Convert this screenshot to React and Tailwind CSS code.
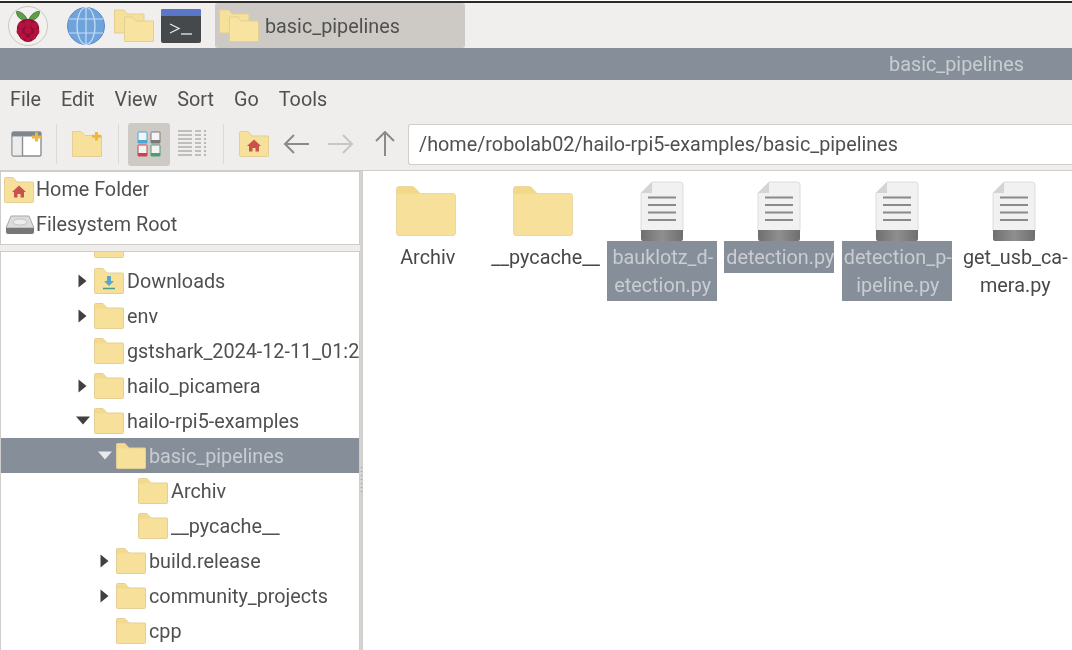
import React from 'react';

const Folder = ({ w = 30, h = 26, className = '' }) => (
  <svg width={w} height={h} viewBox="0 0 30 26" className={`shrink-0 ${className}`}>
    <path d="M0.5 1.5 Q0.5 0.5 1.5 0.5 H9 L13 5 H29 Q29.5 5 29.5 6 V24.5 Q29.5 25.5 28.5 25.5 H1.5 Q0.5 25.5 0.5 24.5 Z" fill="#f6e09a" stroke="#e3cf95" />
    <path d="M1 1.5 H9 L12.5 5.5 H1 Z" fill="#f3d98c" />
  </svg>
);

const HomeMark = ({ x = 15, y = 15, s = 1 }) => (
  <path
    transform={`translate(${x} ${y}) scale(${s})`}
    d="M0 -6.5 L7 0 H5 V5.5 H1.5 V2 H-1.5 V5.5 H-5 V0 H-7 Z"
    fill="#c9524c"
  />
);

const HomeFolder = ({ className = '' }) => (
  <svg width="30" height="26" viewBox="0 0 30 26" className={`shrink-0 ${className}`}>
    <path d="M0.5 1.5 Q0.5 0.5 1.5 0.5 H9 L13 5 H29 Q29.5 5 29.5 6 V24.5 Q29.5 25.5 28.5 25.5 H1.5 Q0.5 25.5 0.5 24.5 Z" fill="#f6e09a" stroke="#e3cf95" />
    <HomeMark x={15} y={15} />
  </svg>
);

const DownloadFolder = () => (
  <svg width="30" height="26" viewBox="0 0 30 26" className="shrink-0">
    <path d="M0.5 1.5 Q0.5 0.5 1.5 0.5 H9 L13 5 H29 Q29.5 5 29.5 6 V24.5 Q29.5 25.5 28.5 25.5 H1.5 Q0.5 25.5 0.5 24.5 Z" fill="#f6e09a" stroke="#e3cf95" />
    <path d="M13 8 H17 V13 H20 L15 18 L10 13 H13 Z" fill="#5aa5c9" />
    <path d="M9 20.5 H21" stroke="#4d9a8f" strokeWidth="1.5" />
  </svg>
);

const BigFolder = () => (
  <svg width="60" height="50" viewBox="0 0 60 50">
    <path d="M0.5 3 Q0.5 0.5 3 0.5 H16 Q18 0.5 19.5 2.5 L24 7.5 H57 Q59.5 7.5 59.5 10 V47 Q59.5 49.5 57 49.5 H3 Q0.5 49.5 0.5 47 Z" fill="#f6e09a" stroke="#ead9a6" />
    <path d="M1 3 Q1 1 3 1 H16 Q18 1 19 2.5 L24 8 H1 Z" fill="#f3d88a" />
  </svg>
);

const FileIcon = () => (
  <svg width="44" height="60" viewBox="0 0 44 60">
    <path d="M12 1 H40 Q43 1 43 4 V50 H1 V12 Z" fill="#f1f1f1" stroke="#dcdcdc" />
    <path d="M12 1 V12 H1 Z" fill="#d4d4d4" />
    <path d="M8 16.5 H36 M8 24 H36 M8 31.5 H36 M8 39 H36" stroke="#8a8a8a" strokeWidth="2" />
    <defs>
      <linearGradient id="fileband" x1="0" x2="1" y1="0" y2="0">
        <stop offset="0" stopColor="#6f6f6f" />
        <stop offset="0.5" stopColor="#8f8f8f" />
        <stop offset="1" stopColor="#6f6f6f" />
      </linearGradient>
    </defs>
    <path d="M1 49 H43 V58 Q43 60 41 60 H3 Q1 60 1 58 Z" fill="url(#fileband)" />
  </svg>
);

const RaspberryLogo = () => (
  <svg width="40" height="40" viewBox="0 0 40 40">
    <circle cx="20" cy="20" r="19.5" fill="#f2f1ef" stroke="#c9c7c4" />
    <path d="M19.5 14 C16 6 10 5 8.5 5.5 C8.5 10 12 15 19.5 14 Z" fill="#5f9e49" stroke="#3f6e36" strokeWidth="0.8" />
    <path d="M20.5 14 C24 6 30 5 31.5 5.5 C31.5 10 28 15 20.5 14 Z" fill="#5f9e49" stroke="#3f6e36" strokeWidth="0.8" />
    <path d="M20 13 C28 13 32 18 31 25 C30 31 25 36 20 36 C15 36 10 31 9 25 C8 18 12 13 20 13 Z" fill="#8f0d33" />
    <g fill="#b5123f">
      <circle cx="20" cy="17.5" r="3.6" />
      <circle cx="13.5" cy="19.5" r="3.3" />
      <circle cx="26.5" cy="19.5" r="3.3" />
      <circle cx="11.5" cy="25.5" r="2.9" />
      <circle cx="28.5" cy="25.5" r="2.9" />
      <circle cx="20" cy="24.5" r="3.6" />
      <circle cx="15" cy="30.5" r="3" />
      <circle cx="25" cy="30.5" r="3" />
      <circle cx="20" cy="33.5" r="2.4" />
    </g>
  </svg>
);

const Globe = () => (
  <svg width="38" height="38" viewBox="0 0 38 38">
    <circle cx="19" cy="19" r="18.5" fill="#6fa3dc" stroke="#5b8cc6" />
    <g fill="none" stroke="#c7dcf3" strokeWidth="1.2">
      <ellipse cx="19" cy="19" rx="9" ry="18.5" />
      <path d="M19 0.5 V37.5 M2 12 H36 M2 26 H36" />
    </g>
  </svg>
);

const StackedFolders = ({ className = '' }) => (
  <svg width="40" height="34" viewBox="0 0 40 34" className={className}>
    <path d="M0.5 1 H10 L13 5 H30 V24 H0.5 Z" fill="#f6e09a" stroke="#e3cf95" />
    <path d="M10.5 8 H19 L22 12 H39.5 V32.5 H10.5 Z" fill="#f8e3a0" stroke="#e3cf95" />
  </svg>
);

const Terminal = () => (
  <svg width="40" height="34" viewBox="0 0 40 34">
    <rect x="0" y="0" width="40" height="34" rx="2" fill="#46494c" />
    <path d="M0 2 Q0 0 2 0 H38 Q40 0 40 2 V7 H0 Z" fill="#5a76c8" />
    <path d="M9 15 L18 19.5 L9 24" fill="none" stroke="#e8e8e8" strokeWidth="1.3" />
    <path d="M20 25 H31" stroke="#e8e8e8" strokeWidth="1.3" />
  </svg>
);

const NewTabIcon = () => (
  <svg width="32" height="26" viewBox="0 0 32 26">
    <rect x="1" y="1" width="29" height="24" rx="1.5" fill="#fff" stroke="#8b8f93" strokeWidth="1.4" />
    <path d="M1 2 Q1 1 2 1 H29 Q30 1 30 2 V5.5 H1 Z" fill="#7e868e" />
    <rect x="1.7" y="6" width="9.5" height="18.3" fill="#ececec" />
    <path d="M11.5 5.5 V25" stroke="#8b8f93" strokeWidth="1.4" />
    <path d="M25.5 1.5 V10.5 M21 6 H30" stroke="#f2b63c" strokeWidth="3" />
  </svg>
);

const NewFolderIcon = () => (
  <svg width="30" height="26" viewBox="0 0 30 26">
    <path d="M0.5 0.5 H9 L13 4.5 H29.5 V25.5 H0.5 Z" fill="#f6e09a" stroke="#e3cf95" />
    <path d="M24.5 1 V9.5 M20 5.3 H29" stroke="#f2b63c" strokeWidth="3" />
  </svg>
);

// each of the four small sheets in the icon view button
const Sheet = ({ x, y, color }) => (
  <g>
    <rect x={x} y={y} width="9" height="11" rx="0.5" fill="#f4f4f4" stroke={color} strokeWidth="1" />
    <rect x={x} y={y + 8} width="9" height="3" fill={color} />
  </g>
);

const IconViewIcon = () => (
  <svg width="24" height="26" viewBox="0 0 24 26">
    <Sheet x={1} y={1} color="#49a7d6" />
    <Sheet x={14} y={1} color="#7a7a7a" />
    <Sheet x={1} y={14} color="#c9444c" />
    <Sheet x={14} y={14} color="#4f9a76" />
  </svg>
);

const ListViewIcon = () => (
  <svg width="28" height="28" viewBox="0 0 28 28" fill="none" stroke="#a4a4a4" strokeWidth="1.3">
    {[1, 5, 9, 13, 17, 21, 25].map((y) => (
      <g key={y}>
        <path d={`M0 ${y} H14`} />
        <path d={`M17 ${y} H23`} />
        <path d={`M26 ${y} H28`} />
      </g>
    ))}
  </svg>
);

const NavArrow = ({ d, color }) => (
  <svg width="28" height="26" viewBox="0 0 28 26" fill="none" stroke={color} strokeWidth="2">
    <path d={d} />
  </svg>
);

const Divider = () => <div className="w-px h-[40px] bg-[#dcdad7]" />;

const DriveIcon = () => (
  <svg width="30" height="20" viewBox="0 0 30 20" className="shrink-0">
    <path d="M6 1 H24 L29 13 H1 Z" fill="#dcdcdc" stroke="#a8a8a8" />
    <ellipse cx="15" cy="7" rx="7" ry="3" fill="#eeeeee" stroke="#c4c4c4" />
    <path d="M1 13 H29 V17 Q29 19 27 19 H3 Q1 19 1 17 Z" fill="#777" />
  </svg>
);

const treeRows = [
  { name: 'Downloads', depth: 1, arrow: 'right', icon: 'download' },
  { name: 'env', depth: 1, arrow: 'right' },
  { name: 'gstshark_2024-12-11_01:2', depth: 1 },
  { name: 'hailo_picamera', depth: 1, arrow: 'right' },
  { name: 'hailo-rpi5-examples', depth: 1, arrow: 'down' },
  { name: 'basic_pipelines', depth: 2, arrow: 'down', selected: true },
  { name: 'Archiv', depth: 3 },
  { name: '__pycache__', depth: 3 },
  { name: 'build.release', depth: 2, arrow: 'right' },
  { name: 'community_projects', depth: 2, arrow: 'right' },
  { name: 'cpp', depth: 2 },
];

const depthPadding = { 1: 'pl-[70px]', 2: 'pl-[92px]', 3: 'pl-[114px]' };

const TreeRow = ({ row }) => (
  <div
    className={`flex items-center h-[35px] whitespace-nowrap overflow-hidden ${depthPadding[row.depth]} ${
      row.selected ? 'bg-[#868f99] text-[#c9cdd2]' : 'text-[#505050]'
    }`}
  >
    <div className="w-[23px] flex justify-center shrink-0">
      {row.arrow === 'right' && (
        <svg width="9" height="14" viewBox="0 0 9 14"><path d="M0.5 0.5 L8.5 7 L0.5 13.5 Z" fill="#404040" /></svg>
      )}
      {row.arrow === 'down' && (
        <svg width="14" height="9" viewBox="0 0 14 9">
          <path d="M0 0.5 H14 L7 8.5 Z" fill={row.selected ? '#e8eaec' : '#404040'} />
        </svg>
      )}
    </div>
    {row.icon === 'download' ? <DownloadFolder /> : <Folder />}
    <span className="ml-[3px] pt-[2px]">{row.name}</span>
  </div>
);

const gridItems = [
  { type: 'folder', lines: ['Archiv'] },
  { type: 'folder', lines: ['__pycache__'] },
  { type: 'file', lines: ['bauklotz_d-', 'etection.py'], selected: true },
  { type: 'file', lines: ['detection.py'], selected: true },
  { type: 'file', lines: ['detection_p-', 'ipeline.py'], selected: true },
  { type: 'file', lines: ['get_usb_ca-', 'mera.py'] },
];

const GridItem = ({ item }) => (
  <div className="w-[117.5px] shrink-0 flex flex-col items-center">
    <div className="h-[58px] flex items-end">
      {item.type === 'folder' ? (
        <div className="mb-[5px] mr-[2px]"><BigFolder /></div>
      ) : (
        <FileIcon />
      )}
    </div>
    <div
      className={`w-[110px] text-center leading-[28px] whitespace-nowrap pt-[3px] pb-[1px] pl-[2px] ${
        item.selected ? 'bg-[#868f99] text-[#c9cdd2]' : 'text-[#484848]'
      }`}
    >
      {item.lines.map((l) => (
        <div key={l}>{l}</div>
      ))}
    </div>
  </div>
);

export default function App() {
  return (
    <div className="w-[1072px] h-[650px] overflow-hidden bg-[#efeeec] blur-[0.4px] font-['Roboto',sans-serif] text-[19.8px] text-[#505050]">
      {/* Panel */}
      <div className="h-[3px] bg-white border-b-2 border-[#2a2a2a]" />
      <div className="h-[45px] flex items-center pl-[8px] bg-[#f0efed]">
        <RaspberryLogo />
        <div className="ml-[19px]"><Globe /></div>
        <StackedFolders className="ml-[9px]" />
        <div className="ml-[7px]"><Terminal /></div>
        <div className="ml-[14px] w-[250px] h-[45px] bg-[#cdcac6] rounded-[3px] flex items-center pl-[4px]">
          <StackedFolders />
          <span className="ml-[6px] pt-[2px]">basic_pipelines</span>
        </div>
      </div>

      {/* Title bar */}
      <div className="h-[32px] bg-[#868f99] flex items-center justify-end pr-[48px] pt-[2px] text-[#c9cdd2]">
        basic_pipelines
      </div>

      {/* Menu */}
      <div className="h-[38px] flex items-center gap-[20px] pl-[10px] pt-[2px]">
        {['File', 'Edit', 'View', 'Sort', 'Go', 'Tools'].map((m) => (
          <span key={m}>{m}</span>
        ))}
      </div>

      {/* Toolbar */}
      <div className="h-[52px] flex items-center pl-[11px]">
        <NewTabIcon />
        <div className="ml-[13px]"><Divider /></div>
        <div className="ml-[15px]"><NewFolderIcon /></div>
        <div className="ml-[16px]"><Divider /></div>
        <div className="ml-[9px] w-[42px] h-[43px] bg-[#cdcac6] rounded-[3px] flex items-center justify-center">
          <IconViewIcon />
        </div>
        <div className="ml-[8px]"><ListViewIcon /></div>
        <div className="ml-[17px]"><Divider /></div>
        <div className="ml-[15px]"><HomeFolder /></div>
        <div className="ml-[13px]"><NavArrow d="M27 13 H3 M12 4 L3 13 L12 22" color="#8a8a8a" /></div>
        <div className="ml-[16px]"><NavArrow d="M2 13 H26 M17 4 L26 13 L17 22" color="#c6c6c6" /></div>
        <div className="ml-[17px]"><NavArrow d="M14 25 V1 M5 10 L14 1 L23 10" color="#8a8a8a" /></div>
        <div className="ml-[9px] flex-1 h-[41px] bg-white border border-[#d0cecb] border-r-0 rounded-l-[3px] flex items-center pl-[10px] pt-[2px]">
          /home/robolab02/hailo-rpi5-examples/basic_pipelines
        </div>
      </div>

      <div className="h-[1px] bg-[#cfcdca]" />

      {/* Panes */}
      <div className="flex h-[479px] bg-[#d6d4d1]">
        <div className="w-[360px] shrink-0 flex flex-col bg-[#efeeec]">
          <div className="h-[74px] bg-white border border-[#cfcdca]">
            <div className="h-[35px] flex items-center pl-[3px]">
              <HomeFolder />
              <span className="ml-[2px]">Home Folder</span>
            </div>
            <div className="h-[35px] flex items-center pl-[4px]">
              <DriveIcon />
              <span className="ml-[1px]">Filesystem Root</span>
            </div>
          </div>
          <div className="mt-[6px] flex-1 bg-white border border-[#cfcdca] border-b-0 overflow-hidden">
            <div className="h-[11px] overflow-hidden pl-[93px] flex items-start">
              <div className="h-[6px] w-[30px] overflow-hidden">
                <div className="-mt-[20px]"><Folder /></div>
              </div>
            </div>
            {treeRows.map((row) => (
              <TreeRow key={row.name} row={row} />
            ))}
          </div>
        </div>

        {/* Pane resize grip */}
        <div className="w-[2px] shrink-0 pt-[296px] flex flex-col items-center gap-[3px]">
          {[0, 1, 2, 3, 4, 5, 6].map((i) => (
            <div key={i} className="w-px h-px bg-[#9a9a9a]" />
          ))}
        </div>

        <div className="flex-1 bg-white border-l border-[#cfcdca] flex items-start pl-[5px] pt-[12px] overflow-hidden">
          {gridItems.map((item) => (
            <GridItem key={item.lines[0]} item={item} />
          ))}
        </div>
      </div>
    </div>
  );
}
